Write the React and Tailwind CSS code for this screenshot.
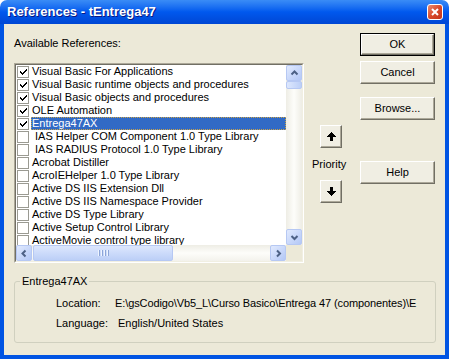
import React from "react";

const refs = [
  { name: "Visual Basic For Applications", checked: true },
  { name: "Visual Basic runtime objects and procedures", checked: true },
  { name: "Visual Basic objects and procedures", checked: true },
  { name: "OLE Automation", checked: true },
  { name: "Entrega47AX", checked: true, selected: true },
  { name: "IAS Helper COM Component 1.0 Type Library", indent: true },
  { name: "IAS RADIUS Protocol 1.0 Type Library", indent: true },
  { name: "Acrobat Distiller" },
  { name: "AcroIEHelper 1.0 Type Library" },
  { name: "Active DS IIS Extension Dll" },
  { name: "Active DS IIS Namespace Provider" },
  { name: "Active DS Type Library" },
  { name: "Active Setup Control Library" },
  { name: "ActiveMovie control type library" },
];

function CheckBox({ checked }) {
  return (
    <div className="w-[12px] h-[12px] border border-[#9a9a92] bg-white flex items-center justify-center shrink-0">
      {checked && (
        <svg width="9" height="8" viewBox="0 0 9 8" shapeRendering="crispEdges">
          <path d="M1 3h1v1h1v1h1V4h1V3h1V2h1V1h1v2H7v1H6v1H5v1H4v1H3V6H2V5H1z" fill="#000" />
        </svg>
      )}
    </div>
  );
}

function Chevron({ dir }) {
  const paths = {
    up: "M2.5 6.5 L5.5 3.5 L8.5 6.5",
    down: "M2.5 4 L5.5 7 L8.5 4",
    left: "M6.5 2.5 L3.5 5.5 L6.5 8.5",
    right: "M4 2.5 L7 5.5 L4 8.5",
  };
  return (
    <svg width="11" height="11" viewBox="0 0 11 11">
      <path d={paths[dir]} fill="none" stroke="#4d6185" strokeWidth="2" />
    </svg>
  );
}

function ScrollBtn({ dir }) {
  return (
    <div className="w-[16px] h-[16px] shrink-0 rounded-[2px] border border-[#b6c8f3] bg-linear-to-br from-[#e1eafe] to-[#b4c8f6] flex items-center justify-center">
      <Chevron dir={dir} />
    </div>
  );
}

function Btn({ children, isDefault }) {
  const face = (
    <div className="h-full w-full bg-[#f0eee3] border border-t-white border-l-white border-b-[#716f64] border-r-[#716f64] shadow-[inset_-1px_-1px_0_#aca899] flex items-center justify-center">
      {children}
    </div>
  );
  if (isDefault) {
    return <div className="w-[75px] h-[23px] border border-black">{face}</div>;
  }
  return <div className="w-[75px] h-[23px]">{face}</div>;
}

function ArrowBtn({ down }) {
  return (
    <div className="w-[22px] h-[23px] bg-[#f0eee3] border border-t-white border-l-white border-b-[#716f64] border-r-[#716f64] shadow-[inset_-1px_-1px_0_#aca899] flex items-center justify-center">
      <svg width="9" height="9" viewBox="0 0 9 9" shapeRendering="crispEdges" className={down ? "rotate-180" : ""}>
        <path d="M4 0h1v1h1v1h1v1h1v1h1v1H6v4H3V5H0V4h1V3h1V2h1V1h1z" fill="#000" />
      </svg>
    </div>
  );
}

export default function App() {
  return (
    <div className="w-[449px] h-[359px] flex flex-col font-['Liberation_Sans',Arial,sans-serif] text-[11px] text-black">
      {/* title bar */}
      <div className="h-[24px] shrink-0 rounded-t-[7px] bg-linear-to-b from-[#3a8cf6] via-[#0058ee] to-[#0047d4] flex items-center pl-[7px] pr-[6px]">
        <span className="text-white font-bold text-[13px] [text-shadow:1px_1px_0_#0a1883]">
          References - tEntrega47
        </span>
        <div className="ml-auto w-[16px] h-[16px] rounded-[3px] border border-white bg-linear-to-br from-[#e98a6e] via-[#d9492a] to-[#c2341a] flex items-center justify-center">
          <svg width="8" height="8" viewBox="0 0 8 8">
            <path d="M1 1 L7 7 M7 1 L1 7" stroke="#fff" strokeWidth="2" />
          </svg>
        </div>
      </div>

      {/* body */}
      <div className="flex-1 flex flex-col bg-[#ece9d8] border-x-4 border-b-4 border-[#0054e3]">
        <div className="flex pt-[9px]">
          {/* list column */}
          <div className="ml-[10px] w-[290px]">
            <div className="mt-[4px] h-[13px] leading-[13px]">Available References:</div>
            <div className="mt-[13px] h-[200px] border border-t-[#aca899] border-l-[#aca899] border-b-white border-r-white">
              <div className="h-full flex flex-col bg-white border border-t-[#716f64] border-l-[#716f64] border-b-[#f1efe2] border-r-[#f1efe2]">
                <div className="flex-1 flex min-h-0">
                  <div className="flex-1 overflow-hidden">
                    {refs.map((r) => (
                      <div key={r.name} className="h-[13px] flex items-center pl-[1px]">
                        <CheckBox checked={r.checked} />
                        {r.selected ? (
                          <div className="ml-[2px] flex-1 h-[13px] leading-[11px] bg-[#316ac5] text-white border border-dotted border-[#c9a248] whitespace-nowrap">
                            {r.name}
                          </div>
                        ) : (
                          <div className={`ml-[2px] flex-1 h-[13px] leading-[13px] whitespace-nowrap ${r.indent ? "pl-[4px]" : "pl-[1px]"}`}>
                            {r.name}
                          </div>
                        )}
                      </div>
                    ))}
                  </div>
                  <div className="w-[16px] flex flex-col bg-linear-to-r from-[#eeede5] via-[#fdfdfa] to-[#eeede5]">
                    <ScrollBtn dir="up" />
                    <div className="h-[8px] rounded-[2px] border border-[#b6c8f3] bg-linear-to-r from-[#dde7fd] to-[#bccff7]" />
                    <div className="flex-1" />
                    <ScrollBtn dir="down" />
                  </div>
                </div>
                <div className="h-[16px] flex bg-linear-to-b from-[#eeede5] via-[#fdfdfa] to-[#f3f2ec]">
                  <ScrollBtn dir="left" />
                  <div className="ml-[1px] w-[140px] rounded-[2px] border border-[#b6c8f3] bg-linear-to-b from-[#dde7fd] to-[#bccff7] flex items-center justify-center gap-[1px]">
                    <div className="w-[1px] h-[6px] bg-[#eef4fe] border-r border-[#8ca5d8] box-content" />
                    <div className="w-[1px] h-[6px] bg-[#eef4fe] border-r border-[#8ca5d8] box-content" />
                    <div className="w-[1px] h-[6px] bg-[#eef4fe] border-r border-[#8ca5d8] box-content" />
                    <div className="w-[1px] h-[6px] bg-[#eef4fe] border-r border-[#8ca5d8] box-content" />
                  </div>
                  <div className="flex-1" />
                  <ScrollBtn dir="right" />
                  <div className="w-[16px] bg-[#ece9d8]" />
                </div>
              </div>
            </div>
          </div>

          {/* priority column */}
          <div className="ml-[7px] w-[30px] pt-[92px]">
            <div className="ml-[9px]">
              <ArrowBtn />
            </div>
            <div className="mt-[10px] h-[13px] leading-[13px] pl-[1px]">Priority</div>
            <div className="mt-[9px] ml-[9px]">
              <ArrowBtn down />
            </div>
          </div>

          {/* button column */}
          <div className="ml-[19px] w-[75px] flex flex-col">
            <Btn isDefault>OK</Btn>
            <div className="mt-[5px]">
              <Btn>Cancel</Btn>
            </div>
            <div className="mt-[13px]">
              <Btn>Browse...</Btn>
            </div>
            <div className="mt-[41px]">
              <Btn>Help</Btn>
            </div>
          </div>
        </div>

        {/* details group */}
        <fieldset className="mt-[12px] ml-[10px] w-[422px] h-[68px] border border-[#d0d0bf] rounded-[3px]">
          <legend className="ml-[5px] px-[2px] leading-[13px]">Entrega47AX</legend>
          <div className="mt-[9px] flex h-[13px] leading-[13px] pl-[41px]">
            <div className="w-[59px]">Location:</div>
            <div className="whitespace-nowrap tracking-[-0.1px]">
              E:\gsCodigo\Vb5_L\Curso Basico\Entrega 47 (componentes)\E
            </div>
          </div>
          <div className="mt-[7px] flex h-[13px] leading-[13px] pl-[41px]">
            <div className="w-[59px]">Language:</div>
            <div className="ml-[3px]">English/United States</div>
          </div>
        </fieldset>
      </div>
    </div>
  );
}
